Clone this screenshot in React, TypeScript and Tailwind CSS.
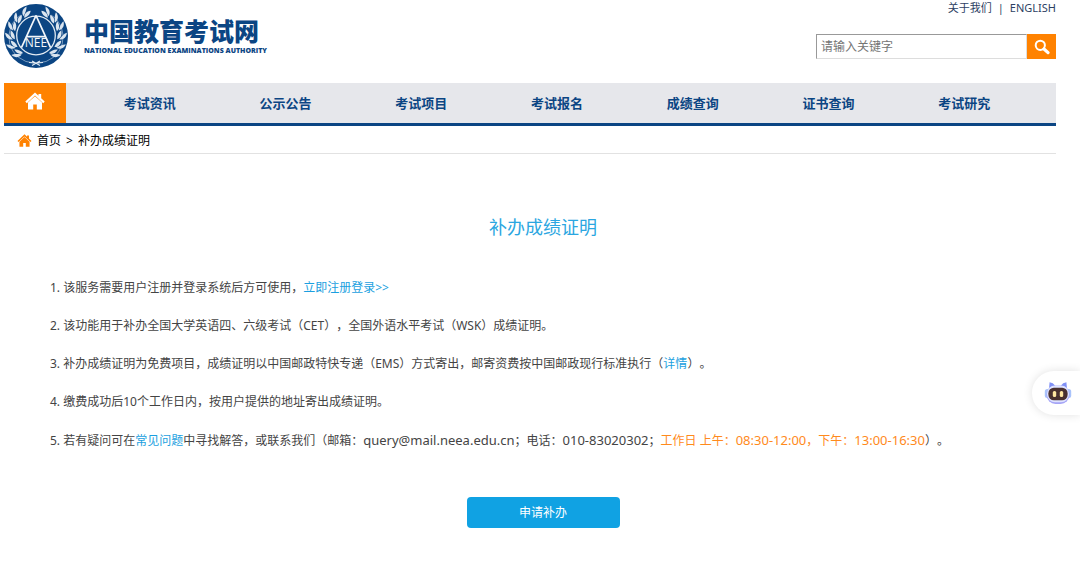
import { useState } from "react";

const navItems = [
  "考试资讯",
  "公示公告",
  "考试项目",
  "考试报名",
  "成绩查询",
  "证书查询",
  "考试研究",
];

const leafAngles = [30, 52, 74, 96, 118, 140];

const Emblem = () => (
  <svg viewBox="0 0 64 64" className="size-16 shrink-0" aria-hidden="true">
    <circle cx="32" cy="32" r="32" fill="#0b4583" />
    <circle cx="32" cy="31.5" r="19.3" fill="none" stroke="#e3ebf3" strokeWidth="1.3" />
    {[1, -1].map((side) => (
      <g key={side} transform={`translate(32 32) scale(${side} 1)`}>
        <path d="M2 27 A26 26 0 0 0 15 -21" fill="none" stroke="#a9c0d8" strokeWidth="0.7" />
        {leafAngles.map((a) => (
          <g key={a} transform={`rotate(${a}) translate(0 -25.4)`} fill="#dbe5ef">
            <path d="M1 2 C-3 -0.5 -5.5 -2.5 -6.5 -5 C-2 -5 1 -2.5 1 2Z" />
            <path d="M1 4 C-3 4.6 -6 3.4 -8 1 C-4 -0.6 0 0.5 1 4Z" />
          </g>
        ))}
        <path d="M-4 29.5 L4 25 M1 27 L7 26.5" stroke="#e3ebf3" strokeWidth="1.1" fill="none" />
      </g>
    ))}
    <path
      d="M17.5 43.5 L32 11.5 L46.5 43.5 M22.5 32.6 H41.5"
      fill="none"
      stroke="#f2f6fa"
      strokeWidth="1.8"
      strokeLinejoin="bevel"
    />
    <text
      x="32"
      y="43"
      textAnchor="middle"
      fill="#f2f6fa"
      className="font-['Open_Sans',sans-serif] text-[12px]"
    >
      NEE
    </text>
  </svg>
);

const HomeIcon = ({ className }: { className: string }) => (
  <svg viewBox="0 0 20 18" className={className} fill="currentColor" aria-hidden="true">
    <path d="M10 0.5 L13.5 3.8 V2 H16.2 V6.3 L19.7 9.6 L18.2 11.2 L10 3.6 L1.8 11.2 L0.3 9.6Z" />
    <path d="M10 4.2 L17 10.6 V17.5 H11.8 V12.5 H8.2 V17.5 H3 V10.6Z" />
  </svg>
);

const BotIcon = () => (
  <svg viewBox="0 0 28 24" className="h-6 w-7" aria-hidden="true">
    <path d="M5 8 L5.6 1.2 Q9 1.5 11.5 5 H16.5 Q19 1.5 22.4 1.2 L23 8Z" fill="#8090f5" />
    <rect x="0.8" y="8" width="5" height="9" rx="2.5" fill="#a9c3fb" />
    <rect x="22.2" y="8" width="5" height="9" rx="2.5" fill="#a9c3fb" />
    <rect x="2.5" y="4.5" width="23" height="18.5" rx="9" fill="#a5a4f6" />
    <rect x="3" y="4.5" width="22" height="16.8" rx="8" fill="#dfe3ff" />
    <rect x="4.4" y="6.7" width="19.2" height="12.6" rx="5.5" fill="#49302f" />
    <rect x="8.8" y="10" width="3.4" height="6" rx="1.5" fill="#ffe6a0" />
    <rect x="15.8" y="10" width="3.4" height="6" rx="1.5" fill="#ffe6a0" />
  </svg>
);

export default function App() {
  const [keyword, setKeyword] = useState("");

  return (
    <div className="min-h-screen bg-white pl-1 pr-6 font-['Noto_Sans','Noto_Sans_CJK_SC',sans-serif] text-xs text-[#444]">
      <header className="flex justify-between">
        <a href="#" className="flex items-center gap-4 pt-1 text-[#0b4583]">
          <Emblem />
          <div>
            <div className="font-['Noto_Sans_CJK_SC',sans-serif] text-[25px] leading-[30px] font-black">
              中国教育考试网
            </div>
            <div className="font-['Open_Sans',sans-serif] text-[7px] leading-3 font-extrabold">
              NATIONAL EDUCATION EXAMINATIONS AUTHORITY
            </div>
          </div>
        </a>
        <div className="flex flex-col items-end">
          <div className="flex gap-1.5 text-[11px] leading-4 text-[#2d3f63]">
            <a href="#">关于我们</a>
            <span>|</span>
            <a href="#">ENGLISH</a>
          </div>
          <form className="mt-[18px] flex" onSubmit={(e) => e.preventDefault()}>
            <input
              type="text"
              aria-label="请输入关键字"
              placeholder="请输入关键字"
              value={keyword}
              onChange={(e) => setKeyword(e.target.value)}
              className="h-[25px] w-[211px] border border-t-[#999] border-r-[#ddd] border-b-[#ddd] border-l-[#999] px-1 placeholder:text-[#757575] focus:outline-none"
            />
            <button
              type="submit"
              aria-label="搜索"
              className="flex h-[25px] w-[29px] items-center justify-center bg-[#ff8200] text-white"
            >
              <svg viewBox="0 0 16 16" className="size-4" fill="none" stroke="currentColor" aria-hidden="true">
                <circle cx="6.3" cy="6.3" r="4.6" strokeWidth="2" />
                <path d="M10 10 L14 13.6" strokeWidth="3.2" strokeLinecap="round" />
              </svg>
            </button>
          </form>
        </div>
      </header>

      <nav className="mt-[15px] flex h-[43px] border-b-[3px] border-[#0b4583] bg-[#e6e7eb]">
        <a
          href="#"
          aria-label="首页"
          className="flex w-[62px] items-center justify-center bg-[#ff8200] pb-1 text-white"
        >
          <HomeIcon className="h-[18px] w-5" />
        </a>
        <div className="flex flex-1 pt-0.5 pl-4 pr-6">
          {navItems.map((item) => (
            <a
              key={item}
              href="#"
              className="flex flex-1 items-center justify-center text-[13px] font-bold text-[#0b4583]"
            >
              {item}
            </a>
          ))}
        </div>
      </nav>

      <div className="flex h-7 items-center gap-[5px] border-b border-[#e2e2e2] pt-0.5 pl-[13px] text-black">
        <HomeIcon className="h-[13px] w-[15px] text-[#ff8200]" />
        <a href="#">首页</a>
        <span>&gt;</span>
        <span>补办成绩证明</span>
      </div>

      <main className="flex flex-col pt-[60px] pl-[26px]">
        <h1 className="text-center text-lg leading-[26px] text-[#2ba6e1]">补办成绩证明</h1>
        <div className="mt-[29px] pl-5 leading-[38px] [text-spacing-trim:space-all]">
          <p>
            1. 该服务需要用户注册并登录系统后方可使用，
            <a href="#" className="text-[#1b9fe0]">
              立即注册登录&gt;&gt;
            </a>
          </p>
          <p>2. 该功能用于补办全国大学英语四、六级考试（CET），全国外语水平考试（WSK）成绩证明。</p>
          <p>
            3. 补办成绩证明为免费项目，成绩证明以中国邮政特快专递（EMS）方式寄出，邮寄资费按中国邮政现行标准执行（
            <a href="#" className="text-[#1b9fe0]">
              详情
            </a>
            ）。
          </p>
          <p>4. 缴费成功后10个工作日内，按用户提供的地址寄出成绩证明。</p>
          <p>
            5. 若有疑问可在
            <a href="#" className="text-[#1b9fe0]">
              常见问题
            </a>
            中寻找解答，或联系我们（邮箱：
            <span className="text-[13px]">query@mail.neea.edu.cn</span>
            ；电话：
            <span className="text-[13px]">010-83020302</span>；
            <span className="text-[#ff8a1c]">
              工作日 上午：<span className="text-[13px]">08:30-12:00</span>，下午：
              <span className="text-[13px]">13:00-16:30</span>
            </span>
            ）。
          </p>
        </div>
        <button
          type="button"
          className="mt-[37px] h-[31px] w-[153px] self-center rounded bg-[#10a2e3] text-white"
        >
          申请补办
        </button>
      </main>

      <button
        type="button"
        aria-label="智能客服"
        className="fixed top-[371px] right-0 flex h-11 w-12 items-center rounded-l-full bg-white pl-3 shadow-[0_0_10px_rgba(0,0,0,0.12)]"
      >
        <BotIcon />
      </button>
    </div>
  );
}
